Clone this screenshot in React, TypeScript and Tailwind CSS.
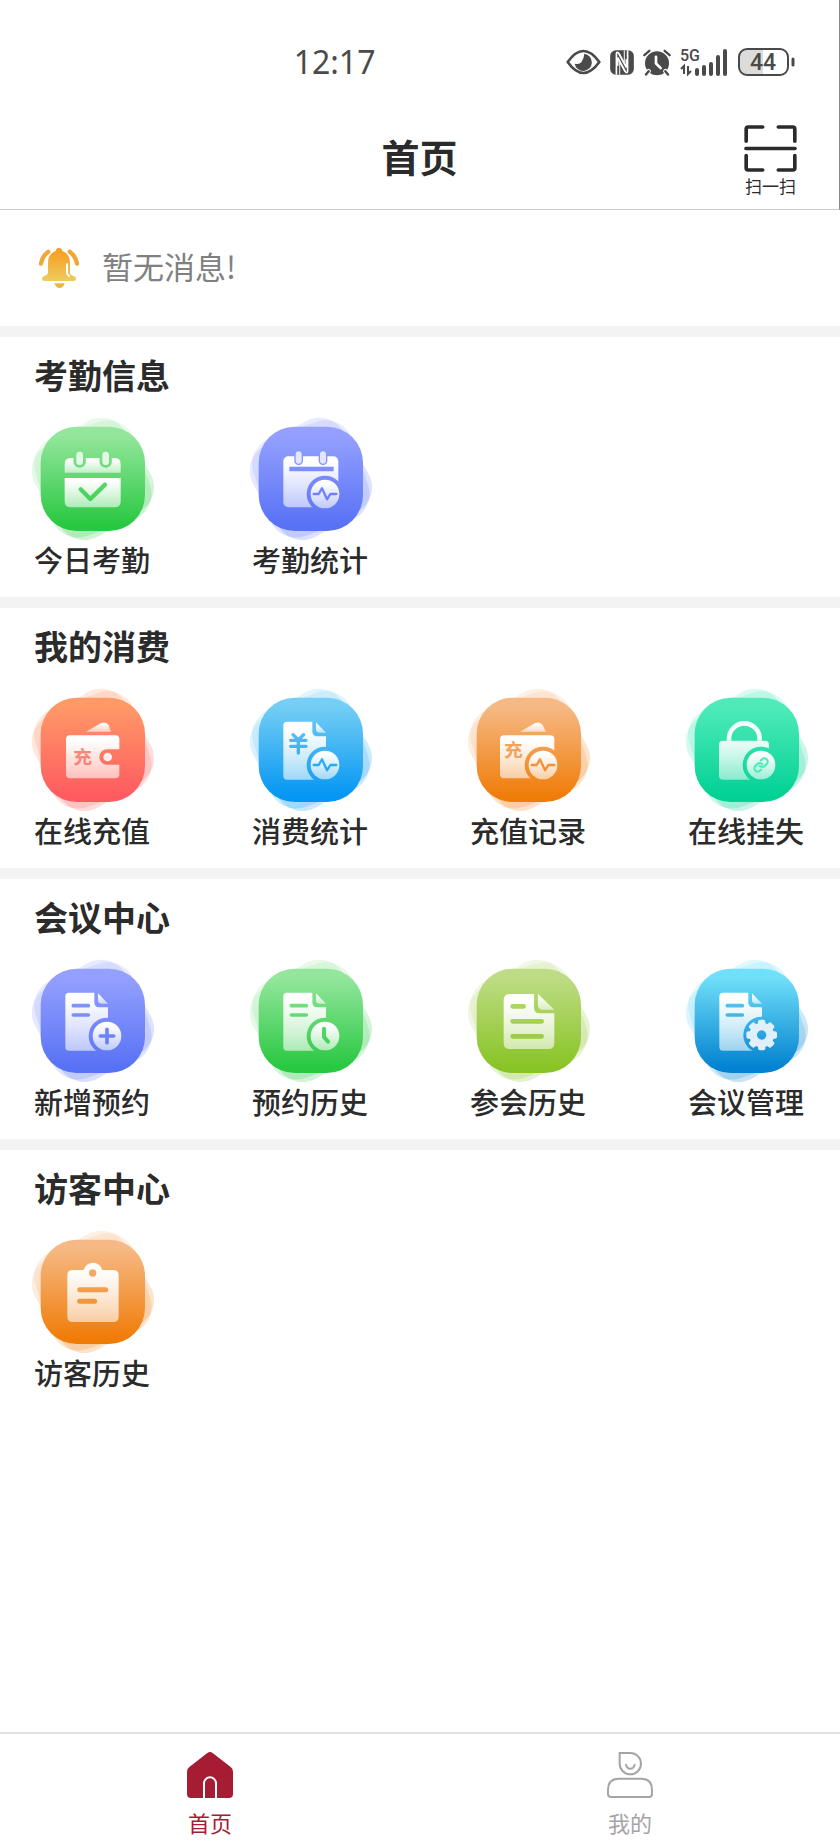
import type { ReactNode } from "react";

type Tone = { id: string; from: string; to: string };

const green: Tone = { id: "green", from: "#94e69c", to: "#28c841" };
const violet: Tone = { id: "violet", from: "#94a0ff", to: "#5872f5" };
const coral: Tone = { id: "coral", from: "#ff9966", to: "#ff5a60" };
const azure: Tone = { id: "azure", from: "#74cef5", to: "#0496f3" };
const orange: Tone = { id: "orange", from: "#f6b985", to: "#f07c08" };
const mint: Tone = { id: "mint", from: "#4eebb9", to: "#02d194" };
const lime: Tone = { id: "lime", from: "#bedc84", to: "#88c425" };
const sky: Tone = { id: "sky", from: "#70dff9", to: "#0282d0" };

const SHEET = "url(#sheet)";

/* Rounded gradient tile with two faded copies turned behind it */
function Tile({ tone, children }: { tone: Tone; children: ReactNode }) {
  const paint = `url(#${tone.id})`;
  return (
    <svg viewBox="0 0 366 369" className="block h-[123px] w-[122px]" aria-hidden="true">
      <rect x="26" y="29" width="313" height="313" rx="84" fill={paint} opacity="0.22" transform="rotate(-31 182.5 185.5)" />
      <rect x="26" y="29" width="313" height="313" rx="84" fill={paint} opacity="0.2" transform="rotate(-19 182.5 185.5)" />
      <rect x="26" y="29" width="313" height="313" rx="108" fill={paint} />
      {children}
    </svg>
  );
}

/* Shared gradients, referenced by id from every tile */
function Gradients() {
  return (
    <svg width="0" height="0" className="absolute" aria-hidden="true">
      <defs>
        {[green, violet, coral, azure, orange, mint, lime, sky].map((t) => (
          <linearGradient key={t.id} id={t.id} gradientUnits="userSpaceOnUse" x1="0" y1="29" x2="0" y2="342">
            <stop offset="0.08" stopColor={t.from} />
            <stop offset="0.95" stopColor={t.to} />
          </linearGradient>
        ))}
        <linearGradient id="sheet" x1="0" y1="0" x2="0" y2="1">
          <stop offset="0.1" stopColor="#fff" />
          <stop offset="1" stopColor="#fff" stopOpacity="0.58" />
        </linearGradient>
        <linearGradient id="bell" x1="0" y1="0" x2="0" y2="1">
          <stop offset="0" stopColor="#f79a1e" />
          <stop offset="1" stopColor="#efcb5e" />
        </linearGradient>
      </defs>
    </svg>
  );
}

function Badge({ paint, children }: { paint: string; children: ReactNode }) {
  return (
    <>
      <circle cx="225" cy="231" r="55" fill={paint} />
      <circle cx="225" cy="231" r="43" fill={SHEET} />
      <g fill="none" stroke={paint} strokeLinecap="round" strokeLinejoin="round">
        {children}
      </g>
    </>
  );
}

const pulse = <path d="M191 231h15l10-17 15 33 10-16h18" strokeWidth="7" />;

function Doc() {
  return (
    <>
      <path d="M111 101h76v29q0 15 15 15h26v130H111q-11 0-11-11V112q0-11 11-11z" fill={SHEET} />
      <path d="M198 103l30 31h-20q-10 0-10-10z" fill={SHEET} />
    </>
  );
}

function DocLines({ paint }: { paint: string }) {
  return <path d="M124 140h45M124 168h45" stroke={paint} strokeWidth="11" strokeLinecap="round" />;
}

function Char({ x, y, fill }: { x: number; y: number; fill: string }) {
  return (
    <text x={x} y={y} fontSize="56" fontWeight="700" textAnchor="middle" fill={fill} fontFamily="'Noto Sans CJK SC', sans-serif">
      充
    </text>
  );
}

function TodayIcon() {
  const paint = "url(#green)";
  return (
    <Tile tone={green}>
      <path d="M98 167v-26q0-18 18-18h132q18 0 18 18v26z" fill={SHEET} />
      <path d="M98 183h168v70q0 18-18 18H116q-18 0-18-18z" fill={SHEET} />
      <path d="M143 114v20M221 114v20" stroke={paint} strokeWidth="37" strokeLinecap="round" />
      <path d="M143 114v20M221 114v20" stroke="#e3f8e5" strokeWidth="20" strokeLinecap="round" />
      <path d="M146 217l29 29 44-43" fill="none" stroke={paint} strokeWidth="13" strokeLinecap="round" strokeLinejoin="round" />
    </Tile>
  );
}

function AttendanceStatsIcon() {
  const paint = "url(#violet)";
  return (
    <Tile tone={violet}>
      <rect x="100" y="118" width="165" height="153" rx="15" fill={SHEET} />
      <path d="M118 156h133" stroke={paint} strokeWidth="13" />
      <path d="M146 112v19M219 112v19" stroke={paint} strokeWidth="26" strokeLinecap="round" />
      <path d="M146 112v19M219 112v19" stroke="#e2e6ff" strokeWidth="18" strokeLinecap="round" />
      <Badge paint={paint}>{pulse}</Badge>
    </Tile>
  );
}

function WalletIcon() {
  const paint = "url(#coral)";
  return (
    <Tile tone={coral}>
      <path d="M162 131l44-25q16-7 24 6l7 19z" fill={SHEET} />
      <rect x="102" y="142" width="160" height="129" rx="12" fill={SHEET} />
      <path d="M264 184h-39a23 23 0 0 0 0 46h39z" fill={paint} />
      <circle cx="227" cy="207" r="13" fill="#fff0ef" />
      <Char x={152} y={229} fill="#fb8479" />
    </Tile>
  );
}

function SpendStatsIcon() {
  const paint = "url(#azure)";
  return (
    <Tile tone={azure}>
      <Doc />
      <path d="M129 140l16 16 16-16M122 157h46M122 175h46M145 157v38" fill="none" stroke={paint} strokeWidth="10" strokeLinecap="round" />
      <Badge paint={paint}>{pulse}</Badge>
    </Tile>
  );
}

function RechargeLogIcon() {
  const paint = "url(#orange)";
  return (
    <Tile tone={orange}>
      <path d="M156 131l44-25q16-7 24 6l10 19z" fill={SHEET} />
      <rect x="96" y="142" width="163" height="129" rx="12" fill={SHEET} />
      <Char x={136} y={206} fill="#f3a25c" />
      <Badge paint={paint}>{pulse}</Badge>
    </Tile>
  );
}

function LockIcon() {
  const paint = "url(#mint)";
  return (
    <Tile tone={mint}>
      <path d="M129 158v-6a46 46 0 0 1 92 0v6" fill="none" stroke="#f1fefa" strokeWidth="14" />
      <path d="M111 158h126q12 0 12 12v105H111q-12 0-12-12v-93q0-12 12-12z" fill={SHEET} fillOpacity="0.88" />
      <Badge paint={paint}>
        <g transform="translate(201 207) scale(2)" strokeWidth="3.2">
          <path d="M10 13a5 5 0 0 0 7.54.54l3-3a5 5 0 0 0-7.07-7.07l-1.72 1.71" />
          <path d="M14 11a5 5 0 0 0-7.54-.54l-3 3a5 5 0 0 0 7.07 7.07l1.71-1.71" />
        </g>
      </Badge>
    </Tile>
  );
}

function NewBookingIcon() {
  const paint = "url(#violet)";
  return (
    <Tile tone={violet}>
      <Doc />
      <DocLines paint={paint} />
      <Badge paint={paint}>
        <path d="M205 231h40M225 211v40" strokeWidth="11" />
      </Badge>
    </Tile>
  );
}

function BookingHistoryIcon() {
  const paint = "url(#green)";
  return (
    <Tile tone={green}>
      <Doc />
      <DocLines paint={paint} />
      <Badge paint={paint}>
        <path d="M222 209v25l12 14" strokeWidth="12" />
      </Badge>
    </Tile>
  );
}

function MeetingHistoryIcon() {
  return (
    <Tile tone={lime}>
      <path d="M125 105h73v41q0 17 17 17h44v89q0 18-18 18H125q-18 0-18-18V123q0-18 18-18z" fill={SHEET} />
      <path d="M210 105l49 47h-34q-15 0-15-15z" fill={SHEET} />
      <path d="M134 142h33M134 187h87M134 232h87" stroke="url(#lime)" strokeWidth="14" strokeLinecap="round" />
    </Tile>
  );
}

function MeetingAdminIcon() {
  const paint = "url(#sky)";
  return (
    <Tile tone={sky}>
      <Doc />
      <DocLines paint={paint} />
      <circle cx="227" cy="228" r="55" fill={paint} />
      <g fill="#dff0fa">
        <circle cx="227" cy="228" r="37" />
        {[0, 45, 90, 135].map((a) => (
          <rect key={a} x="216" y="182" width="22" height="92" rx="6" transform={`rotate(${a} 227 228)`} />
        ))}
      </g>
      <circle cx="227" cy="228" r="14" fill={paint} />
    </Tile>
  );
}

function VisitorIcon() {
  const paint = "url(#orange)";
  return (
    <Tile tone={orange}>
      <path d="M122 120h33a29 29 0 0 1 56 0h33q16 0 16 16v124q0 16-16 16H122q-16 0-16-16V136q0-16 16-16z" fill={SHEET} />
      <circle cx="182" cy="129" r="11" fill={paint} />
      <path d="M143 179h78M143 214h45" stroke={paint} strokeWidth="15" strokeLinecap="round" />
    </Tile>
  );
}

const sections = [
  {
    title: "考勤信息",
    items: [
      { label: "今日考勤", icon: <TodayIcon /> },
      { label: "考勤统计", icon: <AttendanceStatsIcon /> },
    ],
  },
  {
    title: "我的消费",
    items: [
      { label: "在线充值", icon: <WalletIcon /> },
      { label: "消费统计", icon: <SpendStatsIcon /> },
      { label: "充值记录", icon: <RechargeLogIcon /> },
      { label: "在线挂失", icon: <LockIcon /> },
    ],
  },
  {
    title: "会议中心",
    items: [
      { label: "新增预约", icon: <NewBookingIcon /> },
      { label: "预约历史", icon: <BookingHistoryIcon /> },
      { label: "参会历史", icon: <MeetingHistoryIcon /> },
      { label: "会议管理", icon: <MeetingAdminIcon /> },
    ],
  },
  {
    title: "访客中心",
    items: [{ label: "访客历史", icon: <VisitorIcon /> }],
  },
];

function StatusBar() {
  return (
    <div className="flex h-[104px] items-center justify-between pt-5 pr-11 pl-[35%] text-[#4a4a4a]">
      <span className="font-['Noto_Sans'] text-[32px] leading-10">12:17</span>
      <div className="flex items-center gap-[9px]">
        {/* eye comfort */}
        <svg viewBox="0 0 105 78" className="h-[26px] w-[35px]" aria-hidden="true">
          <path d="M5 39Q52-27 100 39Q52 105 5 39z" fill="none" stroke="currentColor" strokeWidth="8" strokeLinejoin="round" />
          <path d="M55 14a26 26 0 1 1-29 30q13 4 20-4 8-11 9-26z" fill="currentColor" />
        </svg>
        {/* NFC */}
        <svg viewBox="0 0 72 76" className="h-[25px] w-[24px]" aria-hidden="true">
          <rect x="0" y="1" width="72" height="74" rx="17" fill="currentColor" />
          <path d="M19 75V12q0-8 6-3l24 44V28M53 1v63q0 8-6 3L23 23v25" fill="none" stroke="#fff" strokeWidth="5" />
          <path d="M29 75V38l16 29M43 1v37L27 9" fill="none" stroke="#fff" strokeWidth="3" />
        </svg>
        {/* alarm */}
        <svg viewBox="0 0 84 80" className="h-[27px] w-[28px]" aria-hidden="true">
          <circle cx="42" cy="42" r="36" fill="currentColor" />
          <path d="M4 18L19 5M80 18L65 5M17 66L9 76M67 66l8 10" stroke="#fff" strokeWidth="13" strokeLinecap="round" />
          <path d="M4 18L19 5M80 18L65 5M17 66L9 76M67 66l8 10" stroke="currentColor" strokeWidth="7" strokeLinecap="round" />
          <path d="M39 23v20l14 14" fill="none" stroke="#fff" strokeWidth="8" strokeLinecap="round" />
        </svg>
        {/* signal */}
        <svg viewBox="0 -4 48 36" className="h-[36px] w-[48px]" aria-hidden="true">
          <text x="0" y="13" fontSize="16" fontWeight="500" fill="currentColor" fontFamily="Roboto, sans-serif">
            5G
          </text>
          <path d="M17 22v4M24 19v7M31 16v10M38 9v17M45 3v23" stroke="currentColor" strokeWidth="4" strokeLinecap="round" />
          <path d="M1 21l3-3v8M8 18v8l3-3" fill="none" stroke="currentColor" strokeWidth="2" />
        </svg>
        {/* battery */}
        <svg viewBox="0 0 58 30" className="h-[30px] w-[58px]" aria-hidden="true">
          <path d="M9 2h17v26H9q-7 0-7-7V9q0-7 7-7z" fill="#dcdcdc" />
          <rect x="2" y="2" width="49" height="26" rx="8" fill="none" stroke="currentColor" strokeWidth="2" />
          <path d="M56 12v6" stroke="currentColor" strokeWidth="3" strokeLinecap="round" />
          <text x="26" y="23" fontSize="23" fontWeight="500" textAnchor="middle" fill="currentColor" fontFamily="Roboto, sans-serif">
            44
          </text>
        </svg>
      </div>
    </div>
  );
}

function Header() {
  return (
    <header className="border-r border-b border-r-[#8a8a8a] border-b-[#cccccc]">
      <StatusBar />
      <div className="grid h-[105px] grid-cols-[1fr_auto_1fr] items-center px-[42px] pt-1">
        <h1 className="col-start-2 pb-1.5 text-[38px] leading-[48px] font-bold">首页</h1>
        <button type="button" className="flex flex-col items-center justify-self-end pt-1">
          <svg viewBox="0 0 159 142" className="h-[47px] w-[53px]" fill="none" stroke="currentColor" strokeWidth="11" strokeLinecap="round" strokeLinejoin="round" aria-hidden="true">
            <path d="M6 49V12q0-6 6-6h44M103 6h44q6 0 6 6v37M6 92v38q0 6 6 6h44M103 136h44q6 0 6-6V92" />
            <path d="M5 71h149" strokeWidth="10" />
          </svg>
          <span className="mt-1 text-[17px] leading-5">扫一扫</span>
        </button>
      </div>
    </header>
  );
}

function Notice() {
  return (
    <div className="flex h-[116px] items-center gap-[23px] px-[39px]">
      <svg viewBox="0 0 120 120" className="h-[40px] w-[40px]" aria-hidden="true">
        <path d="M60 0q9 0 10 9 23 8 23 36v29q0 6 8 9 10 3 10 9 0 7-9 7H18q-9 0-9-7 0-6 10-9 8-3 8-9V45q0-28 23-36 1-9 10-9z" fill="url(#bell)" />
        <path d="M46 106h31q-4 14-15 14t-16-14z" fill="#eeb443" />
        <path d="M28 11Q10 24 6 47M92 11q18 13 22 36" fill="none" stroke="#f2a638" strokeWidth="13" strokeLinecap="round" />
        <path d="M84 49v27l6 8" fill="none" stroke="#fff" strokeWidth="6" strokeLinecap="round" />
      </svg>
      <p className="pb-1 text-[31px] leading-10 text-[#808080]">暂无消息!</p>
    </div>
  );
}

function TabBar() {
  return (
    <nav className="mt-auto grid grid-cols-2 border-t-2 border-[#e2e2e2] pt-[18px] pb-2.5 text-[22px] leading-8">
      <a href="#home" aria-current="page" className="flex flex-col items-center gap-2 text-[#a61c33]">
        <svg viewBox="0 0 138 138" className="h-[46px] w-[46px]" aria-hidden="true">
          <path d="M61 3q8-6 16 0l54 42q7 5 7 14v67q0 12-12 12H12q-12 0-12-12V59q0-9 7-14z" fill="currentColor" />
          <path d="M51 138V94a18 18 0 0 1 36 0v44" fill="none" stroke="#fff" strokeWidth="6" />
        </svg>
        首页
      </a>
      <a href="#mine" className="flex flex-col items-center gap-2 text-[#a5a5a5]">
        <svg viewBox="0 0 138 138" className="h-[46px] w-[46px]" fill="none" stroke="currentColor" strokeWidth="6" aria-hidden="true">
          <path d="M38 3h32a32 32 0 1 1-32 32z" />
          <path d="M57 38q3 12 13 12t13-12" strokeLinecap="round" />
          <path d="M35 80h68q32 0 32 34v12q0 9-9 9H12q-9 0-9-9v-12q0-34 32-34z" />
        </svg>
        我的
      </a>
    </nav>
  );
}

export default function App() {
  return (
    <div className="flex min-h-screen flex-col bg-white font-['Noto_Sans_CJK_SC','Noto_Sans',sans-serif] text-[#2b2b2b]">
      <Gradients />
      <Header />
      <main>
        <Notice />
        {sections.map((section) => (
          <section key={section.title} className="border-t-[11px] border-[#f3f3f3] pt-[18px] pb-[19px]">
            <h2 className="px-[34px] text-[34px] leading-10 font-bold">{section.title}</h2>
            <div className="mt-[22px] grid grid-cols-[repeat(4,122px)] justify-between px-8">
              {section.items.map((item) => (
                <button key={item.label} type="button" className="flex flex-col items-center">
                  {item.icon}
                  <span className="pr-0.5 text-[29px] leading-[38px] font-medium whitespace-nowrap">{item.label}</span>
                </button>
              ))}
            </div>
          </section>
        ))}
      </main>
      <TabBar />
    </div>
  );
}
